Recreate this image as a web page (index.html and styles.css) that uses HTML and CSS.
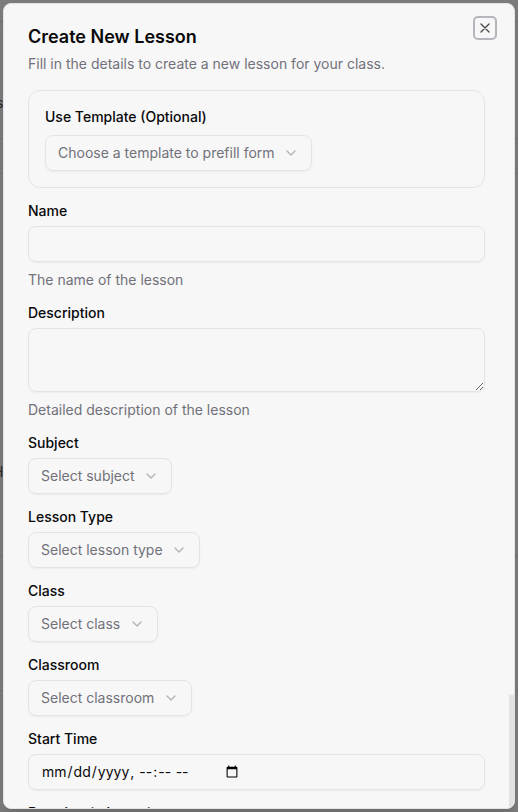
FILE: index.html
```html
<!DOCTYPE html>
<html lang="en">
<head>
<meta charset="utf-8">
<meta name="viewport" content="width=device-width, initial-scale=1">
<title>Create New Lesson</title>
<link rel="stylesheet" href="styles.css">
</head>
<body>
<span class="behind behind-top" aria-hidden="true">s</span>
<span class="behind behind-middle" aria-hidden="true">H</span>
<div class="dialog" role="dialog" aria-labelledby="dialog-title">
  <form class="form">
    <header class="header">
      <h2 class="title" id="dialog-title">Create New Lesson</h2>
      <p class="subtitle">Fill in the details to create a new lesson for your class.</p>
    </header>
    <section class="template">
      <label class="template-label" for="template">Use Template (Optional)</label>
      <span class="picker"><select id="template"><option>Choose a template to prefill form</option></select><svg class="chevron" viewBox="0 0 24 24"><path d="m6 9 6 6 6-6"/></svg></span>
    </section>
    <div class="field">
      <label for="name">Name</label>
      <input class="control" id="name" type="text">
      <p class="help">The name of the lesson</p>
    </div>
    <div class="field">
      <label for="description">Description</label>
      <textarea class="control area" id="description"></textarea>
      <p class="help">Detailed description of the lesson</p>
    </div>
    <div class="field">
      <label for="subject">Subject</label>
      <span class="picker"><select id="subject"><option>Select subject</option></select><svg class="chevron" viewBox="0 0 24 24"><path d="m6 9 6 6 6-6"/></svg></span>
    </div>
    <div class="field">
      <label for="type">Lesson Type</label>
      <span class="picker"><select id="type"><option>Select lesson type</option></select><svg class="chevron" viewBox="0 0 24 24"><path d="m6 9 6 6 6-6"/></svg></span>
    </div>
    <div class="field">
      <label for="class">Class</label>
      <span class="picker"><select id="class"><option>Select class</option></select><svg class="chevron" viewBox="0 0 24 24"><path d="m6 9 6 6 6-6"/></svg></span>
    </div>
    <div class="field">
      <label for="classroom">Classroom</label>
      <span class="picker"><select id="classroom"><option>Select classroom</option></select><svg class="chevron" viewBox="0 0 24 24"><path d="m6 9 6 6 6-6"/></svg></span>
    </div>
    <div class="field">
      <label for="start">Start Time</label>
      <input class="control" id="start" type="datetime-local">
    </div>
    <div class="field">
      <label for="duration">Duration (minutes)</label>
      <input class="control" id="duration" type="text">
    </div>
  </form>
  <div class="scroll-track" aria-hidden="true"><div class="scroll-thumb"></div></div>
  <button class="close" type="button" aria-label="Close"><svg viewBox="0 0 24 24"><path d="M18 6 6 18M6 6l12 12"/></svg></button>
</div>
</body>
</html>
```
FILE: styles.css
```css
* { box-sizing: border-box; }

body {
  margin: 0;
  height: 100vh;
  padding: 3px;
  display: flex;
  justify-content: center;
  overflow: hidden;
  background:
    linear-gradient(#727272, #727272) 0 21px / 100% 1px no-repeat,
    linear-gradient(#727272, #727272) 0 138px / 100% 1px no-repeat,
    linear-gradient(#727272, #727272) 0 173px / 100% 1px no-repeat,
    linear-gradient(#727272, #727272) 0 555px / 100% 1px no-repeat,
    linear-gradient(#727272, #727272) 0 690px / 100% 1px no-repeat,
    #7c7c7c;
  color: #09090b;
  font: 14px/20px Inter, "Liberation Sans", sans-serif;
}

.behind {
  position: absolute;
  left: -4px;
  color: #2a2a2c;
}
.behind-top { top: 93px; }
.behind-middle { top: 462px; left: -7px; }

.dialog {
  position: relative;
  display: flex;
  width: 100%;
  max-width: 512px;
  border: 1px solid #e4e4e7;
  border-radius: 8px;
  background: #f7f7f7;
  box-shadow: 0 10px 15px -3px rgb(0 0 0 / 10%), 0 4px 6px -4px rgb(0 0 0 / 10%);
  overflow: hidden;
}

.form {
  flex: 1;
  min-width: 0;
  padding: 24px;
  display: flex;
  flex-direction: column;
  gap: 16px;
  overflow-y: auto;
  scrollbar-width: none;
}
.form > * { flex-shrink: 0; }

.scroll-track {
  width: 5px;
  background: #e2e2e2;
}
.scroll-thumb {
  height: 86%;
  border-radius: 0 0 3px 3px;
  background: #f7f7f7;
}

.header, .field {
  display: flex;
  flex-direction: column;
  gap: 8px;
}

.title {
  margin: 0;
  font-size: 18px;
  line-height: 18px;
  font-weight: 600;
}

.subtitle, .help {
  margin: 0;
  color: #71717a;
}

.template {
  padding: 16px;
  display: flex;
  flex-direction: column;
  gap: 8px;
  border: 1px solid #e4e4e7;
  border-radius: 12px;
}

label {
  font-weight: 500;
  line-height: 14px;
}
.template-label { line-height: 20px; }

.control, select {
  height: 36px;
  margin: 0;
  border: 1px solid #e4e4e7;
  border-radius: 8px;
  background: transparent;
  box-shadow: 0 1px 2px rgb(0 0 0 / 5%);
  font: inherit;
  color: inherit;
}
.control {
  width: 100%;
  padding: 4px 12px;
}
.control::-webkit-datetime-edit { flex: 0 0 182px; }
.area {
  height: 64px;
  display: block;
  padding: 8px 12px;
  resize: vertical;
}

.picker {
  position: relative;
  display: flex;
  align-self: flex-start;
}
select {
  appearance: none;
  padding: 0 36px 0 12px;
  color: #71717a;
}
.chevron {
  position: absolute;
  right: 13px;
  top: 10px;
  width: 16px;
  height: 16px;
  opacity: 0.5;
  pointer-events: none;
}
svg {
  fill: none;
  stroke: #71717a;
  stroke-width: 2;
  stroke-linecap: round;
  stroke-linejoin: round;
}

.close {
  position: absolute;
  top: 12px;
  right: 17px;
  width: 24px;
  height: 24px;
  padding: 0;
  display: grid;
  place-items: center;
  border: 2px solid #b5b5bb;
  border-radius: 5px;
  background: #f7f7f7;
}
.close svg {
  width: 16px;
  height: 16px;
  stroke: #4b4b4d;
}
```
